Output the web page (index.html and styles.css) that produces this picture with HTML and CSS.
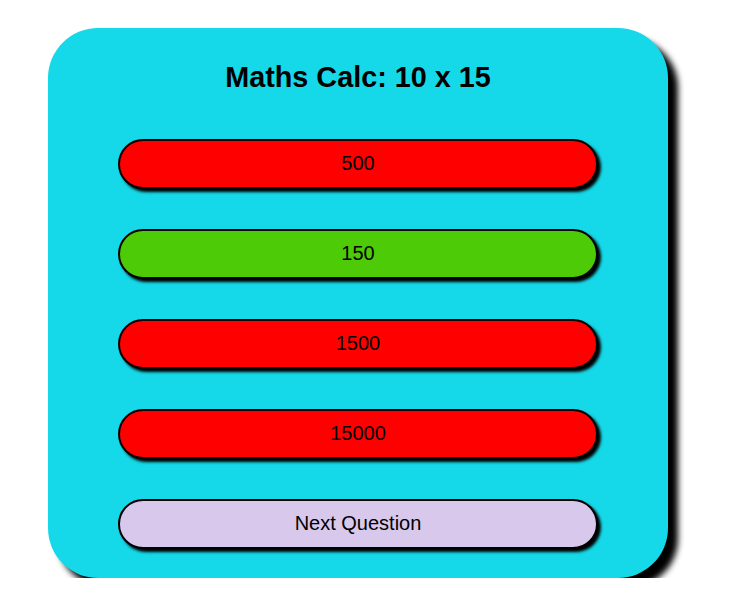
FILE: index.html
```html
<!DOCTYPE html>
<html>
<head>
<meta charset="utf-8">
<link rel="stylesheet" href="styles.css">
</head>
<body>
<div class="card">
  <h1 class="title">Maths Calc: 10 x 15</h1>
  <div class="answers">
    <button class="btn wrong">500</button>
    <button class="btn right">150</button>
    <button class="btn wrong">1500</button>
    <button class="btn wrong">15000</button>
    <button class="btn next">Next Question</button>
  </div>
</div>
</body>
</html>
```
FILE: styles.css
```css
html, body {
  margin: 0;
  padding: 0;
  background: #ffffff;
}
body {
  padding: 28px 0 0 48px;
  font-family: "Liberation Sans", Arial, sans-serif;
}
.card {
  box-sizing: border-box;
  width: 620px;
  height: 550px;
  background: #15d9e8;
  border-radius: 50px;
  box-shadow: 10px 10px 6px #000;
  padding-top: 34px;
  display: flex;
  flex-direction: column;
  align-items: center;
}
.title {
  margin: 0;
  font-size: 28.8px;
  line-height: 30px;
  font-weight: bold;
  color: #000;
}
.answers {
  margin-top: 47px;
  display: flex;
  flex-direction: column;
  gap: 40px;
}
.btn {
  box-sizing: border-box;
  width: 480px;
  height: 50px;
  border: 2px solid #000;
  border-radius: 25px;
  box-shadow: 3px 3px 3px #000;
  font-family: "Liberation Sans", Arial, sans-serif;
  font-size: 20px;
  color: #000;
  padding: 0 0 2px 0;
}
.wrong { background: #ff0000; }
.right { background: #4ccb06; }
.next { background: #d8c8ec; }
```
